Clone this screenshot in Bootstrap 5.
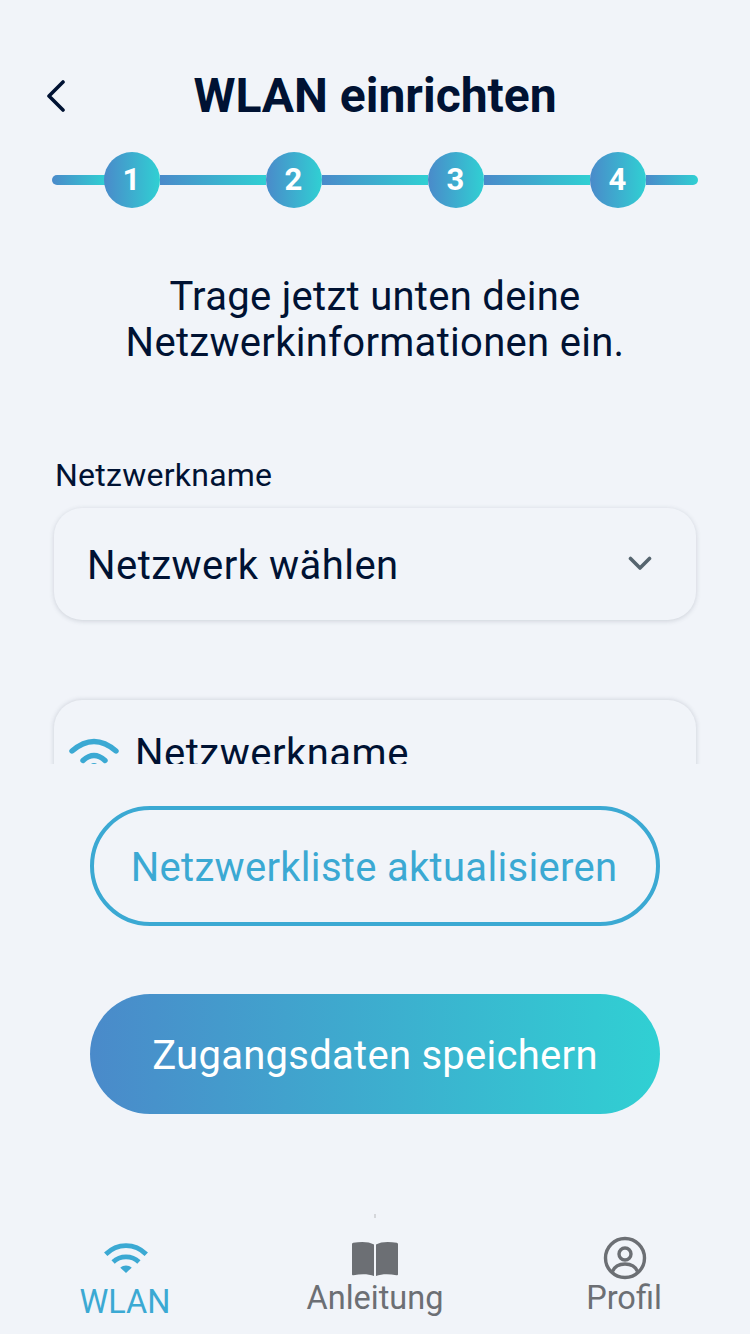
<!DOCTYPE html>
<html lang="de">
<head>
<meta charset="utf-8">
<title>WLAN einrichten</title>
<link href="https://cdn.jsdelivr.net/npm/bootstrap@5.3.0/dist/css/bootstrap.min.css" rel="stylesheet">
<style>
html,body{height:1334px;overflow:hidden}
body{background:#f1f4f9;font-family:Roboto,"Liberation Sans",sans-serif;color:#001233;width:750px}
.screen{height:1334px}
.topbar{height:60px;margin-top:66px;padding-left:46px}
.topbar svg{flex:none}
.page-title{position:absolute;left:0;right:0;top:66px;font-size:48px;font-weight:700;line-height:60px;text-align:center;margin:0;color:#001233}
.topbar-wrap{position:relative}
.stepper{margin:26px 52px 0;height:56px}
.seg{height:10px;background:linear-gradient(90deg,#4a8aca,#30d0d3)}
.seg-a{width:54px;margin-right:-2px;border-radius:5px 0 0 5px}
.seg-m{width:106px}
.seg-z{width:52px;border-radius:0 5px 5px 0}
.step{width:56px;height:56px;flex:none;background:linear-gradient(90deg,#4a8aca,#30d0d3);color:#fff;font-size:31px;font-weight:700;padding-right:1px}
.intro{font-size:40px;letter-spacing:.29px;line-height:46px;text-align:center;margin:65px 0 0;height:92px;padding-top:1px}
.field-label{font-size:32px;letter-spacing:.25px;line-height:34px;margin:93px 0 0 55px}
.clipper{height:272px;overflow:hidden}
.selectbox{margin:16px 54px 0;height:112px;border-radius:28px;background:#f1f4f9;box-shadow:0 1px 5px rgba(60,70,90,.2);padding:0 44px 0 33px;font-size:40px;letter-spacing:.47px;color:#001233}
.selecttext{padding-top:3px}
.listbox{margin:80px 54px 0;border-radius:28px;background:#f1f4f9;box-shadow:0 0 5px rgba(60,70,90,.22);height:120px;padding:26px 0 0 14px}
.netname{font-size:40px;letter-spacing:.5px;line-height:52px;margin-left:15px;padding-top:2px}
.wide-btn{width:570px;height:120px;border-radius:60px;font-size:40px;line-height:1;margin:0 auto;display:flex;align-items:center;justify-content:center}
.btn-line{margin-top:42px;padding:3px 2px 0 0;border:4px solid #3ba9d3;color:#3ba9d3;background:transparent;letter-spacing:.3px}
.btn-line:hover{color:#3ba9d3;background:transparent;border-color:#3ba9d3}
.btn-fill{margin-top:68px;padding:3px 0 0;border:0;color:#fff;background:linear-gradient(90deg,#4a8aca,#30d0d3);letter-spacing:.27px}
.btn-fill:hover{color:#fff;background:linear-gradient(90deg,#4a8aca,#30d0d3)}
.tick{width:2px;height:4px;background:#d5d7db;margin:100px auto 0}
.bottombar{height:116px;padding:0}
.tab{width:250px;color:#6c6f74;font-size:32.5px;line-height:38px;text-decoration:none}
.tab:hover{color:#6c6f74}
.tab-on,.tab-on:hover{color:#3ba9d3}
.tab-wifi{margin:25px 0 7px 2px}
.tab-book{margin-top:23px;margin-bottom:2px}
.tab-user{margin-top:18px;margin-bottom:-1px}
.tab-name-end{margin-right:2px}
</style>
</head>
<body>
<div class="screen d-flex flex-column">
  <div class="topbar-wrap">
    <h1 class="page-title">WLAN einrichten</h1>
    <div class="topbar d-flex align-items-center">
      <svg width="20" height="32" viewBox="0 0 20 32"><path d="M17 2 3 16l14 14" fill="none" stroke="#001233" stroke-width="3.6" stroke-linecap="round" stroke-linejoin="round"/></svg>
    </div>
  </div>
  <div class="stepper d-flex align-items-center">
    <div class="seg seg-a"></div>
    <div class="step rounded-circle d-flex align-items-center justify-content-center">1</div>
    <div class="seg seg-m"></div>
    <div class="step rounded-circle d-flex align-items-center justify-content-center">2</div>
    <div class="seg seg-m"></div>
    <div class="step rounded-circle d-flex align-items-center justify-content-center">3</div>
    <div class="seg seg-m"></div>
    <div class="step rounded-circle d-flex align-items-center justify-content-center">4</div>
    <div class="seg seg-z"></div>
  </div>
  <p class="intro">Trage jetzt unten deine<br>Netzwerkinformationen ein.</p>
  <label class="field-label">Netzwerkname</label>
  <div class="clipper">
    <div class="selectbox d-flex align-items-center justify-content-between">
      <span class="selecttext">Netzwerk wählen</span>
      <svg width="24" height="16" viewBox="0 0 24 16"><path d="M2.500 2.500 12 12 21.500 2.500" fill="none" stroke="#56656f" stroke-width="3.6" stroke-linecap="round" stroke-linejoin="round"/></svg>
    </div>
    <div class="listbox d-flex align-items-start">
      <svg width="52" height="40" viewBox="0 0 52 40" class="flex-shrink-0" style="margin-top:10px"><g fill="none" stroke="#3ba9d3" stroke-width="5.400" stroke-linecap="round"><path d="M4 15Q26 -4 48 15"/><path d="M15 24.500Q26 14.500 37 24.500"/></g><circle cx="26" cy="31" r="4" fill="#3ba9d3"/></svg>
      <span class="netname">Netzwerkname</span>
    </div>
  </div>
  <button class="btn wide-btn btn-line" type="button">Netzwerkliste aktualisieren</button>
  <button class="btn wide-btn btn-fill" type="button">Zugangsdaten speichern</button>
  <div class="tick"></div>
  <nav class="bottombar d-flex justify-content-between">
    <a class="tab tab-on d-flex flex-column align-items-center" href="#">
      <svg class="tab-wifi" width="44" height="33" viewBox="0 0 46 34"><g fill="none" stroke="#3ba9d3" stroke-width="5"><path d="M1.800 11.500C14 -.5 32 -.5 44.200 11.500"/><path d="M9.500 19.500C17 12.500 29 12.500 36.500 19.500"/></g><path d="M23 31 17 25.500C20.500 22.500 25.500 22.500 29 25.500Z" fill="#3ba9d3"/></svg>
      <span>WLAN</span>
    </a>
    <a class="tab d-flex flex-column align-items-center" href="#">
      <svg class="tab-book" width="46" height="36" viewBox="0 0 46 36"><path d="M22 3.500V35C16.500 32.800 9 32.500 1.500 34.300.7 34.500 0 34 0 33.200V3.500C0 2.600.5 2 1.300 1.800 9 .3 17 .5 22 3.500ZM24 3.500V35C29.500 32.800 37 32.500 44.500 34.300 45.300 34.500 46 34 46 33.200V3.500C46 2.600 45.500 2 44.700 1.800 37 .3 29 .5 24 3.500Z" fill="#6c6f74"/></svg>
      <span>Anleitung</span>
    </a>
    <a class="tab d-flex flex-column align-items-center" href="#">
      <svg class="tab-user" width="44" height="44" viewBox="0 0 44 44"><g fill="none" stroke="#6c6f74" stroke-width="3.400"><circle cx="22" cy="22" r="19.500"/><circle cx="22" cy="18" r="6"/><path d="M9.500 35.500C11.500 30.500 16 28 22 28S32.500 30.500 34.500 35.500"/></g></svg>
      <span class="tab-name-end">Profil</span>
    </a>
  </nav>
</div>
</body>
</html>
